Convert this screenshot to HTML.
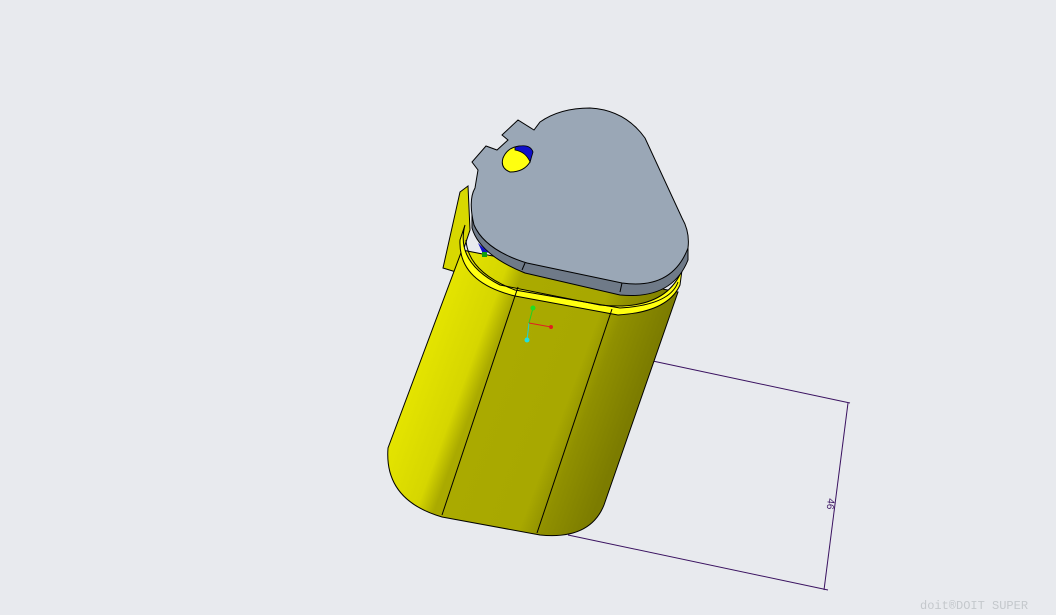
<!DOCTYPE html>
<html><head><style>
html,body{margin:0;padding:0;background:#e8eaee;width:1056px;height:615px;overflow:hidden}
</style></head><body>
<svg width="1056" height="615" viewBox="0 0 1056 615" xmlns="http://www.w3.org/2000/svg" style="position:absolute;left:0;top:0">
<defs>
<linearGradient id="body" x1="425" y1="350" x2="627" y2="425" gradientUnits="userSpaceOnUse">
<stop offset="0" stop-color="#e4e400"/>
<stop offset="0.22" stop-color="#d6d600"/>
<stop offset="0.3" stop-color="#aaaa00"/>
<stop offset="0.7" stop-color="#a8a800"/>
<stop offset="0.8" stop-color="#909000"/>
<stop offset="1" stop-color="#7c7c00"/>
</linearGradient>
</defs>
<g stroke="#3a1260" stroke-width="1" fill="none">
<line x1="648" y1="360" x2="850" y2="403"/>
<line x1="568" y1="535" x2="828" y2="590"/>
<line x1="848" y1="403" x2="824" y2="590"/>
</g>
<text x="0" y="0" font-family="Liberation Sans,sans-serif" font-size="10" fill="#3a1260" transform="translate(828,498) rotate(97)">46</text>
<path d="M468,186 L460,192 L443,268 L456,272 L470,230 Z" fill="#d8d800" stroke="#000" stroke-width="1"/>
<path d="M462,250 L388,448 Q384,500 442,517 L540,535 Q590,540 604,505 L678,292 Z" fill="url(#body)" stroke="#000" stroke-width="1"/>
<path d="M465,225 Q455,262 500,285 L600,305 Q665,312 682,270 L680,285 Q668,312 618,315 L515,296 Q458,282 460,240 Z" fill="#ffff10" stroke="#000" stroke-width="1"/>
<path d="M466,240 Q468,272 515,290 L620,308 Q670,305 678,282" fill="none" stroke="#000" stroke-width="1"/>
<g stroke="#000" stroke-width="1">
<line x1="518" y1="287" x2="442" y2="515"/>
<line x1="612" y1="309" x2="537" y2="533"/>
</g>
<path d="M472,205 L472,228 Q480,255 525,273 L620,295 Q672,300 688,260 L688,240 Z" fill="#6f7a88" stroke="#000" stroke-width="1"/>
<path d="M475,188 Q468,200 474,225 Q485,250 527,263 L622,283 Q672,290 688,248 Q690,232 682,218 L645,138 Q625,110 590,108 Q560,108 540,122 L534,130 L518,120 L502,135 L508,140 L497,150 L486,146 L472,162 L478,170 Z" fill="#9aa7b6" stroke="#000" stroke-width="1"/>
<path d="M503,158 Q508,146 522,146 Q534,150 530,162 Q524,172 510,172 Q500,168 503,158 Z" fill="#ffff10" stroke="#000" stroke-width="1"/>
<path d="M515,147 Q530,143 533,152 L530,162 Q526,152 515,150 Z" fill="#1010c8" stroke="#000" stroke-width="0.8"/>
<path d="M478,243 L484,256 L488,252 Z" fill="#1010c8"/>
<rect x="482" y="252" width="5" height="5" fill="#10a010"/>
<line x1="525" y1="263" x2="522" y2="270" stroke="#000"/>
<line x1="622" y1="283" x2="620" y2="292" stroke="#000"/>
<line x1="533" y1="308" x2="529" y2="323" stroke="#20d020" stroke-width="1"/>
<line x1="529" y1="323" x2="527" y2="340" stroke="#20d0d0" stroke-width="1"/>
<line x1="529" y1="323" x2="551" y2="327" stroke="#e02020" stroke-width="1"/>
<circle cx="533" cy="308" r="2.5" fill="#20e020"/>
<circle cx="527" cy="340" r="2.5" fill="#20e0e0"/>
<circle cx="551" cy="327" r="2" fill="#e02020"/>
<text x="920" y="609" font-family="Liberation Mono,monospace" font-size="12" fill="#c4c8cc">doit®DOIT SUPER</text>
</svg>
</body></html>
